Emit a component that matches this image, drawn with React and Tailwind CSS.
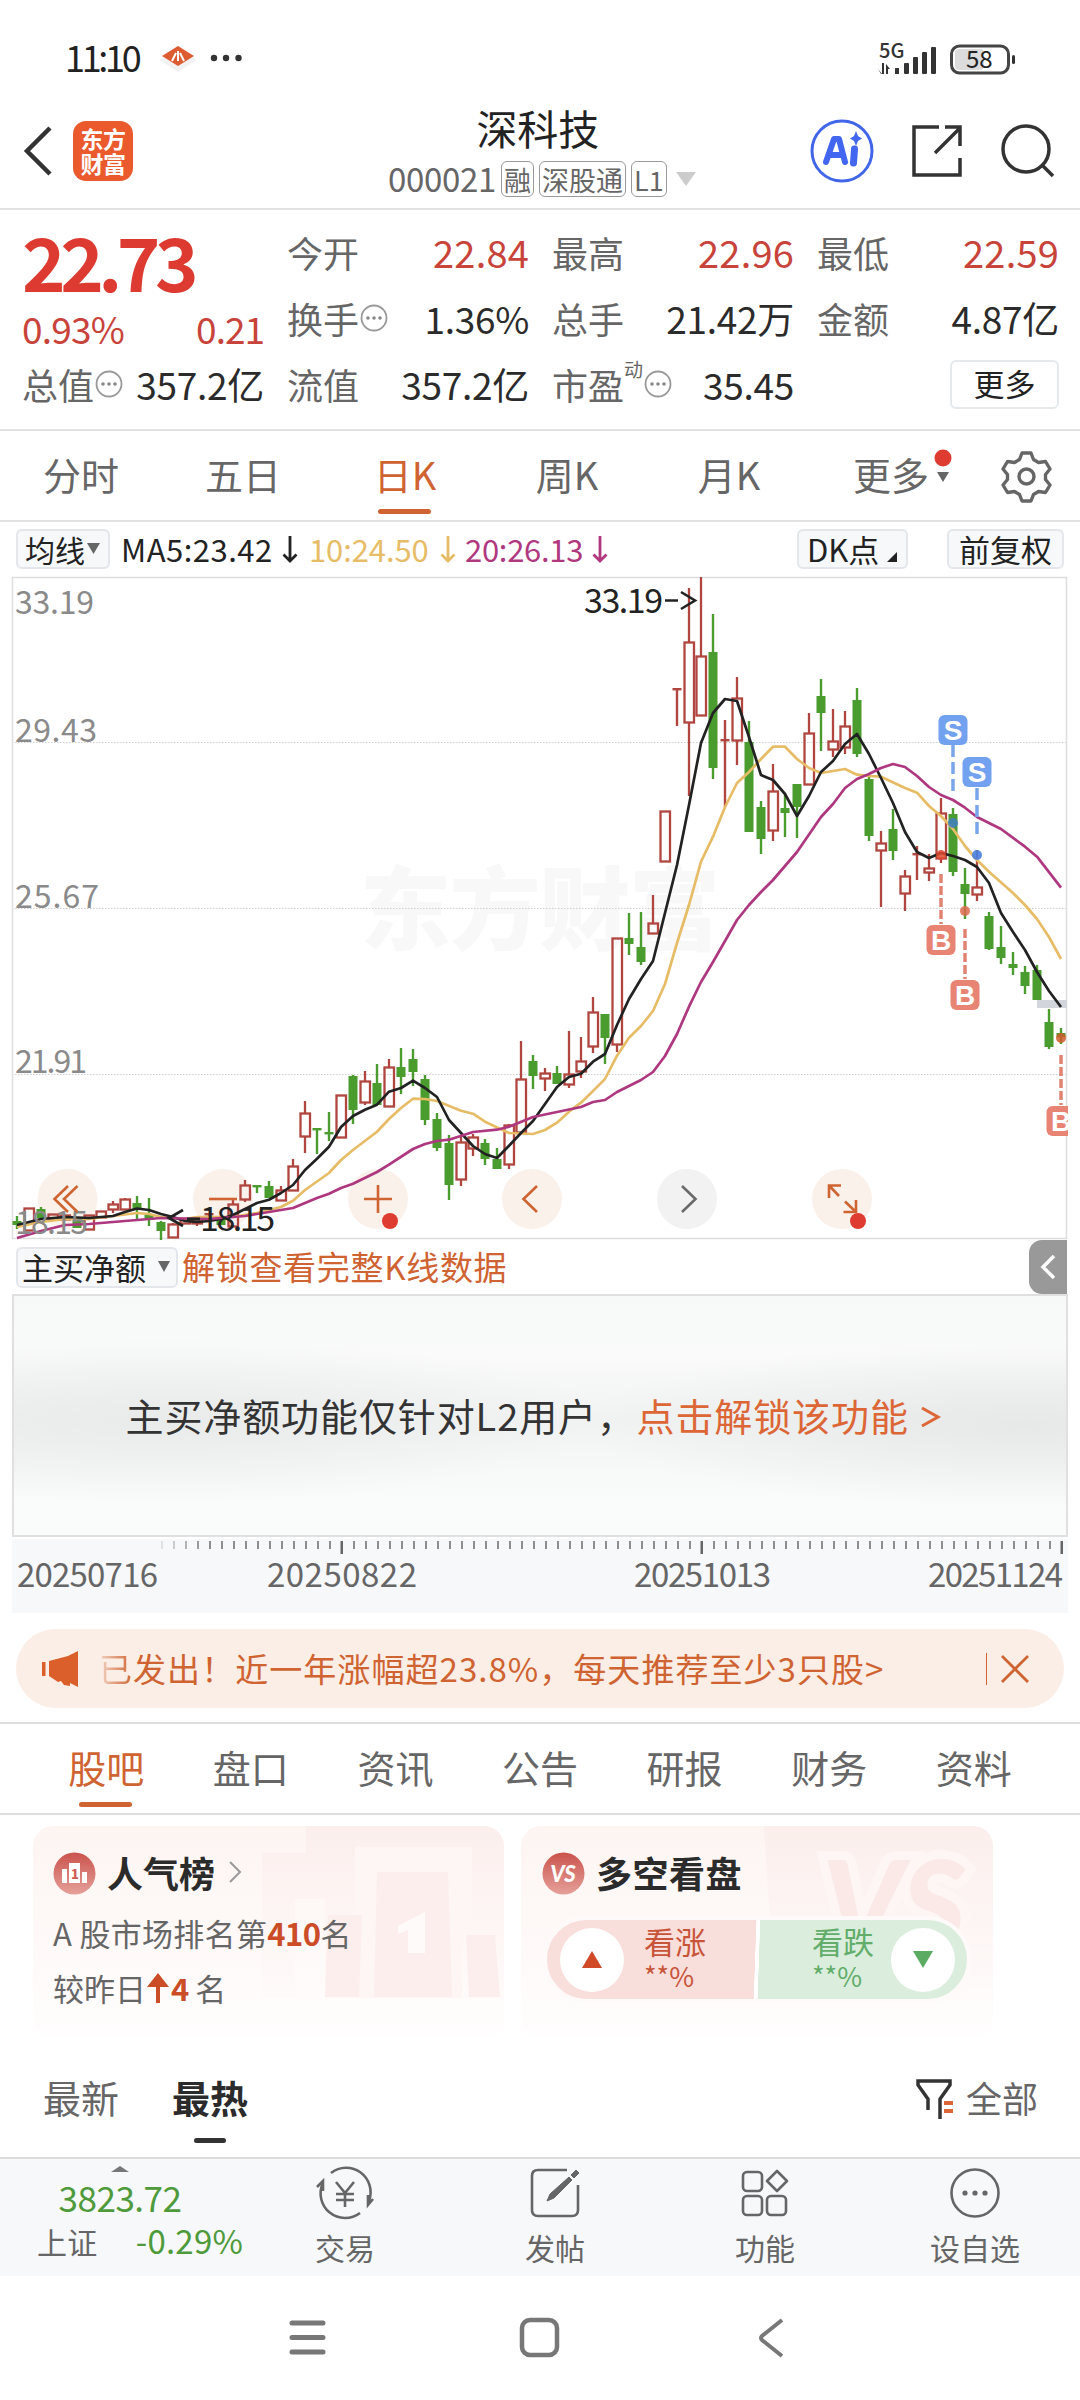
import React from "react";

// [type, high, bodyTop, bodyBottom, low], one entry per trading day
const candles = [
  ["g", 1216, 1221, 1225, 1229],
  ["r", 1208, 1208, 1230, 1230],
  ["g", 1207, 1209, 1218, 1218],
  ["r", 1214, 1214, 1218, 1218],
  ["r", 1215, 1215, 1219, 1219],
  ["g", 1218, 1218, 1228, 1228],
  ["r", 1215, 1215, 1229, 1229],
  ["r", 1211, 1211, 1217, 1217],
  ["r", 1201, 1204, 1209, 1213],
  ["r", 1198, 1199, 1209, 1209],
  ["g", 1196, 1203, 1210, 1219],
  ["g", 1198, 1215, 1220, 1226],
  ["g", 1221, 1222, 1231, 1240],
  ["r", 1223, 1224, 1237, 1238],
  ["r", 1218, 1219, 1223, 1223],
  ["r", 1218, 1219, 1223, 1226],
  ["r", 1213, 1213, 1214, 1220],
  ["g", 1216, 1218, 1225, 1225],
  ["r", 1199, 1204, 1226, 1226],
  ["r", 1180, 1185, 1199, 1202],
  ["g", 1185, 1185, 1186, 1193],
  ["g", 1181, 1186, 1198, 1198],
  ["r", 1186, 1190, 1200, 1200],
  ["r", 1159, 1166, 1190, 1190],
  ["r", 1101, 1113, 1136, 1153],
  ["g", 1128, 1128, 1130, 1154],
  ["g", 1112, 1132, 1133, 1141],
  ["r", 1095, 1095, 1137, 1138],
  ["g", 1075, 1076, 1110, 1124],
  ["r", 1071, 1081, 1102, 1105],
  ["g", 1064, 1083, 1105, 1105],
  ["r", 1059, 1067, 1106, 1106],
  ["g", 1048, 1067, 1077, 1094],
  ["g", 1049, 1059, 1072, 1086],
  ["g", 1075, 1079, 1120, 1125],
  ["g", 1113, 1119, 1148, 1151],
  ["g", 1135, 1143, 1185, 1200],
  ["r", 1135, 1142, 1179, 1186],
  ["r", 1134, 1137, 1148, 1156],
  ["g", 1139, 1143, 1159, 1165],
  ["g", 1148, 1159, 1169, 1169],
  ["r", 1124, 1125, 1164, 1169],
  ["r", 1041, 1079, 1132, 1132],
  ["g", 1055, 1061, 1076, 1089],
  ["r", 1068, 1073, 1078, 1091],
  ["g", 1066, 1073, 1084, 1084],
  ["r", 1031, 1074, 1084, 1088],
  ["r", 1037, 1061, 1071, 1078],
  ["r", 997, 1012, 1046, 1053],
  ["g", 1014, 1014, 1038, 1064],
  ["r", 938, 938, 1044, 1052],
  ["g", 913, 938, 944, 955],
  ["g", 912, 947, 962, 965],
  ["r", 895, 923, 933, 933],
  ["r", 811, 811, 861, 861],
  ["r", 688, 688, 689, 726],
  ["r", 588, 642, 722, 796],
  ["r", 577, 656, 715, 715],
  ["g", 614, 652, 768, 779],
  ["r", 720, 739, 740, 807],
  ["r", 677, 698, 740, 765],
  ["g", 721, 742, 832, 832],
  ["g", 801, 807, 839, 854],
  ["r", 764, 791, 830, 841],
  ["g", 795, 808, 813, 837],
  ["g", 784, 784, 807, 838],
  ["r", 713, 733, 784, 785],
  ["g", 679, 696, 713, 751],
  ["r", 709, 741, 749, 757],
  ["r", 711, 726, 747, 754],
  ["g", 688, 700, 754, 757],
  ["g", 777, 779, 836, 841],
  ["r", 831, 843, 850, 907],
  ["g", 809, 829, 851, 860],
  ["r", 870, 876, 893, 911],
  ["r", 846, 853, 854, 880],
  ["r", 854, 868, 872, 881],
  ["r", 798, 813, 858, 863],
  ["g", 808, 814, 872, 876],
  ["g", 868, 884, 894, 919],
  ["r", 850, 887, 894, 901],
  ["g", 912, 916, 949, 950],
  ["g", 926, 947, 958, 964],
  ["g", 952, 964, 968, 975],
  ["g", 966, 972, 986, 994],
  ["g", 965, 970, 1000, 1000],
  ["g", 1009, 1022, 1047, 1049],
  ["g", 1028, 1033, 1037, 1044],
];

const ma5 =
  "17,1225 41,1219 65,1217 89,1218 113,1216 125,1212 137,1208.5 149,1210 161,1214 173,1217 185,1221 197,1222 209,1221 221,1219 233,1215 257,1203 269,1199.7 281,1193 293,1185 305,1170 317,1158.7 329,1146.7 341,1127 353,1116 365,1109.7 377,1104.7 389,1091.7 401,1088 413,1080.7 425,1088 437,1097 449,1120 461,1133 473,1146 485,1154 497,1158 509,1145.7 521,1133 533,1121 545,1104 557,1087 569,1077 581,1073.7 593,1061.7 605,1054 617,1025 629,999 641,979 653,961 665,913 677,865 689,805 701,743 713,713 725,699 737,701 749,737 761,775 773,780 785,794 797,816 809,796 821,772 833,761 845,744 857,734 869,754 881,778 893,803 905,832 917,852 929,858 941,853 953,856 965,860 977,867 989,883 1001,913 1013,932 1025,950 1037,972 1049,991 1061,1007";

const ma10 =
  "17,1227 41,1222 65,1219 89,1219 113,1216 137,1213 149,1214 161,1217 185,1219 197,1217 233,1217 257,1213 269,1210 281,1207 293,1200.7 305,1190 329,1173 341,1160 353,1150 377,1131.7 389,1119 401,1108 413,1098.7 425,1099 437,1101 461,1110.7 473,1113.7 485,1121.7 509,1133 533,1134 545,1130 557,1122.7 569,1111.7 581,1102.7 593,1091 605,1079 617,1055.7 629,1037.7 641,1026 653,1011 665,984 677,943 689,905 701,861.7 713,836.7 725,807 737,783 749,772 761,759 773,746.7 785,746.7 797,759 809,768 821,773 845,769 857,774.7 869,776 881,776.7 905,788 917,792.7 929,806 941,816 953,829 965,846 977,860 989,871.7 1013,893 1025,905 1037,919 1049,937 1061,959";

const ma20 =
  "17,1238 41,1231 65,1225 89,1224 137,1220 161,1218 209,1219 245,1216 269,1212 293,1208 317,1198 329,1193.7 341,1188 353,1183.7 377,1172 389,1164.7 413,1149 425,1144 437,1141 449,1139.7 473,1132 497,1129.7 509,1126.7 533,1117 557,1112 581,1107 593,1102 605,1100 617,1092 641,1080 653,1072 665,1056 677,1034 689,1006.7 701,982 713,962 725,941 737,920 749,905 761,892 773,880 785,866 797,852 821,817 833,804 845,788 857,779 869,774 881,768 893,764 905,767 917,776 929,787 941,795 953,800 965,807.7 977,817 1001,829 1025,846.7 1037,856.7 1061,887.7";

const RED = "#b0463f";
const GREEN = "#4a9c2e";
const ORANGE = "#cf6432";

const Candle = ({ x, data }) => {
  const [type, high, top, bottom, low] = data;
  if (type === "g") {
    return (
      <g fill={GREEN}>
        <rect x={x - 1.2} y={high} width="2.4" height={low - high} />
        <rect x={x - 4.5} y={top} width="9" height={Math.max(bottom - top, 2.4)} />
      </g>
    );
  }
  if (bottom - top < 2) {
    return (
      <g fill={RED}>
        <rect x={x - 1.2} y={high} width="2.4" height={low - high} />
        <rect x={x - 4.5} y={top} width="9" height="2.4" />
      </g>
    );
  }
  return (
    <g stroke={RED} strokeWidth="2.3" fill="none">
      <path d={`M${x} ${high}V${top}M${x} ${bottom}V${low}`} />
      <rect x={x - 4.5} y={top + 0.5} width="9.5" height={bottom - top} />
    </g>
  );
};

const Flag = ({ x, y, letter, color }) => (
  <g>
    <rect x={x - 14.5} y={y - 15} width="29" height="30" rx="6" fill={color} />
    <text
      x={x}
      y={y + 10}
      textAnchor="middle"
      fontSize="28"
      fontWeight="700"
      fill="#fff"
      fontFamily="Liberation Sans"
    >
      {letter}
    </text>
  </g>
);

const Chart = () => (
  <svg width="1080" height="664" viewBox="0 576 1080 664" className="block shrink-0">
    <text x="360" y="943" fontSize="91" fontWeight="900" fill="#f8f8f8" textLength="360">
      东方财富
    </text>
    <g stroke="#cfcfcf" strokeWidth="1" strokeDasharray="1.5 1.5">
      <path d="M12 742.5H1067M12 908.5H1067M12 1074.5H1067" />
    </g>
    <path d="M12.5 577.5H1066.5V1238.5H12.5Z" fill="none" stroke="#dedede" strokeWidth="1.5" />

    {[67.5, 223, 378, 532, 687, 842].map((cx) => (
      <circle key={cx} cx={cx} cy="1199" r="30" fill={cx === 687 ? "#f2f2f3" : "#fbf1eb"} />
    ))}
    <rect x="1037" y="1000" width="30" height="8" fill="#d3d5dc" />

    {candles.map((c, i) => (
      <Candle key={i} x={17 + i * 12} data={c} />
    ))}
    <g fill="none" strokeWidth="2.7" strokeLinejoin="round">
      <polyline points={ma10} stroke="#e6bd66" />
      <polyline points={ma5} stroke="#222" />
      <polyline points={ma20} stroke="#ae387f" />
    </g>

    {/* buy / sell markers */}
    <g strokeWidth="3.5" strokeDasharray="9 6">
      <path d="M953 745V796M977 788V839" stroke="#79a6ea" strokeDasharray="12 5" />
      <path d="M941 874V924M965 929V979M1061 1055V1105" stroke="#df8473" strokeDasharray="9 3" />
    </g>
    <circle cx="941" cy="855" r="5" fill="#e2492f" opacity="0.85" />
    <circle cx="953" cy="823" r="5" fill="#3f7fc0" opacity="0.85" />
    <circle cx="977" cy="855" r="5" fill="#4a7fe0" opacity="0.9" />
    <circle cx="965" cy="911" r="5" fill="#dc6a4c" opacity="0.85" />
    <circle cx="1061" cy="1038" r="5" fill="#cf5a2c" opacity="0.85" />
    <Flag x={953} y={730} letter="S" color="#72a1f0" />
    <Flag x={977} y={772} letter="S" color="#72a1f0" />
    <Flag x={941} y={940} letter="B" color="#e88474" />
    <Flag x={965} y={995} letter="B" color="#e88474" />
    <clipPath id="chartEdge">
      <rect x="0" y="576" width="1068" height="664" />
    </clipPath>
    <g clipPath="url(#chartEdge)">
      <Flag x={1061} y={1121} letter="B" color="#e88474" />
    </g>

    <g fontSize="32" fill="#8a8a8a">
      <text x="15" y="614" textLength="79">33.19</text>
      <text x="15" y="742" textLength="82">29.43</text>
      <text x="15" y="908" textLength="84">25.67</text>
      <text x="15" y="1073" textLength="72">21.91</text>
      <text x="15" y="1234" textLength="73">18.15</text>
    </g>
    <g fontSize="34" fill="#222">
      <text x="584" y="613" textLength="79">33.19</text>
      <path d="M665 600.5H678M681 592L695 600.5L681 609" fill="none" stroke="#222" strokeWidth="2.6" />
      <text x="200" y="1231" textLength="75">18.15</text>
      <path d="M187 1219H200M183 1210L169 1218L183 1226" fill="none" stroke="#222" strokeWidth="2.8" />
    </g>

    <g fill="none" stroke={ORANGE} strokeWidth="2.600">
      <path d="M68 1186L54.500 1199L68 1212M77.500 1186L64 1199L77.500 1212" />
      <path d="M209 1199H237" />
      <path d="M364 1199H392M378 1185V1213" />
      <path d="M537 1186L523.500 1199L537 1212" />
      <path d="M829 1198V1185.500H841M829 1185.500L839 1196M856 1200V1212H843.500M856 1212L845 1201.500" />
      <path d="M682 1186L695.500 1199L682 1212" stroke="#6a6a6a" />
    </g>
    <circle cx="390" cy="1221" r="8" fill="#de3c30" />
    <circle cx="858" cy="1221" r="8" fill="#de3c30" />
  </svg>
);

const ticks = Array.from({ length: 76 }, (_, i) => 161 + i * 12);

const DateAxis = () => (
  <div className="mx-[12px] mt-[2px] h-[74px] bg-[#f7f8fa]">
    <svg width="1055" height="74" viewBox="12 1539 1055 74" className="block">
      {ticks.map((x, i) => {
        const major = (x - 341) % 360 === 0;
        return (
          <rect
            key={x}
            x={major ? x - 0.5 : x}
            y="1541"
            width={major ? 2.5 : 2}
            height={major ? 13 : 8}
            fill={major ? "#666" : "#8c8c8c"}
            opacity={i < 4 ? 0.2 + i * 0.22 : 1}
          />
        );
      })}
      <g fontSize="33" fill="#666">
        <text x="17" y="1587" textLength="141">20250716</text>
        <text x="267" y="1587" textLength="150">20250822</text>
        <text x="634" y="1587" textLength="137">20251013</text>
        <text x="928" y="1587" textLength="135">20251124</text>
      </g>
    </svg>
  </div>
);

const StatusBar = () => (
  <div className="flex h-[115px] shrink-0 items-center pl-[65px] pr-[63px]">
    <span className="-mt-[4px] w-[77px] text-[36px] leading-none tracking-[-3.300px] text-[#222]">
      11:10
    </span>
    <svg width="100" height="36" viewBox="160 40 100 36" className="ml-[18px]">
      <path d="M178 48L196 60L178 72L160 60Z" fill="#f2f2f2" />
      <path d="M178 46L194 56L178 66L162 56Z" fill="#dd5b31" />
      <path d="M172 61L176 53M178 61V51M184 61L180 53" stroke="#fff" strokeWidth="2" />
      <circle cx="214" cy="58" r="3.200" fill="#333" />
      <circle cx="226" cy="58" r="3.200" fill="#333" />
      <circle cx="238.500" cy="58" r="3.200" fill="#333" />
    </svg>
    <svg width="140" height="46" viewBox="877 32 140 46" className="ml-auto mt-[-2px]">
      <text x="879" y="56" fontSize="20" fontWeight="500" fill="#333">
        5G
      </text>
      <g fill="#333">
        <path d="M878 67L882 72V61H884V72H881ZM886 72V62L890 67H888V72Z" />
        <rect x="895" y="66" width="4" height="6" />
        <rect x="904" y="61" width="5" height="11" rx="1" />
        <rect x="913" y="55" width="5" height="17" rx="1" />
        <rect x="922" y="50" width="5" height="22" rx="1" />
        <rect x="931" y="45" width="5" height="27" rx="1" />
        <rect x="1012" y="53" width="3" height="9" rx="1.500" />
      </g>
      <rect x="951.500" y="44" width="57" height="27" rx="8" fill="#fff" stroke="#444" strokeWidth="3" />
      <rect x="955" y="47" width="29" height="21" rx="4" fill="#dcdcdc" />
      <text x="966" y="66" fontSize="24" fill="#222">
        58
      </text>
    </svg>
  </div>
);

const Tag = ({ children }) => (
  <span className="mr-[5px] flex h-[36px] items-center rounded-[6px] border-[1.5px] border-[#999] px-[2px] text-[27px] leading-none text-[#666]">
    {children}
  </span>
);

const Header = () => (
  <div className="flex h-[95px] shrink-0 justify-between border-b-2 border-[#e2e2e2]">
    <div className="flex w-[388px] pl-[22px] pt-[6px]">
      <svg width="32" height="60" viewBox="0 0 32 60" fill="none" stroke="#333" strokeWidth="4.500">
        <path d="M28 7L5 30L28 53" />
      </svg>
      <div className="ml-[19px] flex h-[60px] w-[60px] flex-col items-center justify-center rounded-[13px] bg-[#ea5a2d] text-[23px] font-bold leading-[25px] tracking-[-0.500px] text-white">
        <span>东方</span>
        <span>财富</span>
      </div>
    </div>
    <div className="flex flex-col">
      <div className="mt-[-9px] mr-[8px] text-center text-[41px] leading-[42px] text-[#222]">深科技</div>
      <div className="mt-[13px] flex items-center text-[33px] leading-[36px] text-[#666]">
        <span className="mr-[5px] -mt-[2px] tracking-[-0.300px]">000021</span>
        <Tag>融</Tag>
        <Tag>深股通</Tag>
        <Tag>L1</Tag>
        <svg width="20" height="14" className="ml-[4px]">
          <path d="M0 0H20L10 14Z" fill="#ccc" />
        </svg>
      </div>
    </div>
    <svg width="270" height="66" viewBox="810 118 270 66" fill="none" className="ml-auto mt-[3px]">
      <circle cx="842" cy="151" r="30" stroke="#4266e8" strokeWidth="3" />
      <path d="M826 162L834 139H839L845 162M830 155H842" stroke="#4266f0" strokeWidth="6" strokeLinejoin="round" strokeLinecap="round" />
      <path d="M854.500 149L853.500 163" stroke="#4266f0" strokeWidth="7" strokeLinecap="round" />
      <path d="M856 131L858 136L862 138.500L858 141L856 146L854 141L850 138.500L854 136Z" fill="#4266f0" />
      <g stroke="#333" strokeWidth="3.500">
        <path d="M939 127H914V175H960V158M945 127H960V146M960 128L935 153" />
        <circle cx="1026" cy="149" r="23" />
        <path d="M1042 165L1053 176" />
      </g>
    </svg>
  </div>
);

const Dots = () => (
  <svg width="28" height="28" viewBox="0 0 28 28" className="ml-[1px]">
    <circle cx="14" cy="14" r="12.500" fill="none" stroke="#999" strokeWidth="1.800" />
    <circle cx="8" cy="14" r="1.800" fill="#888" />
    <circle cx="14" cy="14" r="1.800" fill="#888" />
    <circle cx="20" cy="14" r="1.800" fill="#888" />
  </svg>
);

const Cell = ({ label, value, red, dots, sup }) => (
  <div className="flex h-[66px] items-center justify-between whitespace-nowrap leading-none">
    <span className="-ml-[2px] flex items-center text-[36px] text-[#666]">
      {label}
      {sup && <span className="mt-[-32px] text-[19px]">{sup}</span>}
      {dots && <Dots />}
    </span>
    <span
      className={
        red
          ? "text-[38px] tracking-[0.200px] text-[#c8443b]"
          : "text-[37px] tracking-[-0.300px] text-[#2b2b2b]"
      }
    >
      {value}
    </span>
  </div>
);

const Quote = () => (
  <div className="grid h-[221px] shrink-0 grid-cols-[240px_240px_240px_240px] gap-x-[25px] border-b-2 border-[#e2e2e2] pl-[24px] pt-[9px]">
    <div>
      <div className="-ml-[2px] h-[87px] pt-[4px] text-[74px] font-bold leading-[74px] tracking-[-5.500px] text-[#dd3b31]">
        22.73
      </div>
      <div className="flex h-[45px] items-center justify-between text-[37px] leading-none text-[#c8443b]">
        <span className="-ml-[2px] tracking-[-0.800px]">0.93%</span>
        <span className="tracking-[-1px]">0.21</span>
      </div>
      <Cell label="总值" value="357.2亿" dots />
    </div>
    <div>
      <Cell label="今开" value="22.84" red />
      <Cell label="换手" value="1.36%" dots />
      <Cell label="流值" value="357.2亿" />
    </div>
    <div>
      <Cell label="最高" value="22.96" red />
      <Cell label="总手" value="21.42万" />
      <Cell label="市盈" value="35.45" sup="动" dots />
    </div>
    <div>
      <Cell label="最低" value="22.59" red />
      <Cell label="金额" value="4.87亿" />
      <div className="flex h-[66px] items-center justify-end">
        <div className="flex h-[49px] w-[109px] items-center justify-center rounded-[6px] border-2 border-[#e6e9ec] pb-[3px] text-[31px] leading-none text-[#222]">
          更多
        </div>
      </div>
    </div>
  </div>
);

const PeriodTabs = () => (
  <div className="flex h-[91px] shrink-0 border-b-2 border-[#e2e2e2] text-[38px] leading-[85px] text-[#666]">
    {["分时", "五日", "日K", "周K", "月K", "更多"].map((t) => (
      <div
        key={t}
        className={
          t === "日K"
            ? "relative w-[162px] text-center text-[#cf6331]"
            : "relative w-[162px] text-center"
        }
      >
        {t}
        {t === "日K" && (
          <span className="absolute bottom-[6px] left-[54px] h-[5px] w-[53px] rounded-full bg-[#cf6331]" />
        )}
        {t === "更多" && (
          <svg width="18" height="34" className="absolute left-[124px] top-[18px]">
            <circle cx="9" cy="9" r="8.500" fill="#de3c30" />
            <path d="M3 23H15L9 33Z" fill="#666" />
          </svg>
        )}
      </div>
    ))}
    <svg width="108" height="88" viewBox="972 432 108 88" fill="none" stroke="#666" strokeWidth="3.400">
      <path
        strokeLinejoin="round"
        d="M1022 454h9l2.500 6.500 5 3 7-1 4.500 7.500-4.500 5.500v5l4.500 5.500-4.500 7.500-7-1-5 3-2.500 6.500h-9l-2.500-6.500-5-3-7 1-4.500-7.500 4.500-5.500v-5l-4.500-5.500 4.500-7.500 7 1 5-3z"
      />
      <circle cx="1026.500" cy="477.500" r="7.500" />
    </svg>
  </div>
);

const Down = ({ className }) => (
  <svg width="18" height="30" viewBox="0 0 18 30" className={className}>
    <path d="M9 2V27M2.500 20.500L9 27L15.500 20.500" fill="none" stroke="currentColor" strokeWidth="2.800" />
  </svg>
);

const MaRow = () => (
  <div className="flex h-[54px] shrink-0 items-center whitespace-nowrap px-[16px] text-[31px] leading-none text-[#222]">
    <div className="flex h-[40px] w-[94px] shrink-0 items-center rounded-[6px] border-2 border-[#e3e6ea] bg-[#f6f8fa] pb-[1px] pl-[7px] text-[30px]">
      均线
      <svg width="13" height="11" className="ml-[2px]">
        <path d="M0 0H13L6.500 11Z" fill="#666" />
      </svg>
    </div>
    <span className="-mt-[2px] ml-[11px] w-[160px] tracking-[0.500px]">MA5:23.42</span>
    <Down className="shrink-0" />
    <span className="-mt-[2px] ml-[10px] w-[130px] tracking-[-0.100px] text-[#e6bd66]">10:24.50</span>
    <Down className="shrink-0 text-[#e6bd66]" />
    <span className="-mt-[2px] ml-[8px] w-[126px] tracking-[-0.300px] text-[#b0387f]">20:26.13</span>
    <Down className="shrink-0 text-[#b0387f]" />
    <div className="ml-auto flex h-[40px] w-[111px] items-center rounded-[6px] border-2 border-[#e3e6ea] bg-[#f6f8fa] pb-[2px] pl-[8px]">
      DK点
      <svg width="10" height="10" className="ml-[8px] mt-[18px]">
        <path d="M10 0V10H0Z" fill="#222" />
      </svg>
    </div>
    <div className="ml-[39px] flex h-[40px] w-[117px] items-center justify-center rounded-[6px] border-2 border-[#e3e6ea] bg-[#f6f8fa] pb-[2px]">
      前复权
    </div>
  </div>
);

const UnlockRow = () => (
  <div className="flex h-[54px] shrink-0 items-center pl-[16px] pr-[13px] leading-none">
    <div className="flex h-[41px] w-[162px] items-center rounded-[6px] border-2 border-[#e3e6ea] bg-[#f6f8fa] pb-[2px] pl-[4px] text-[31px] text-[#222]">
      主买净额
      <svg width="12" height="11" className="ml-[12px]">
        <path d="M0 0H12L6 11Z" fill="#666" />
      </svg>
    </div>
    <span className="-mt-[2px] ml-[4px] text-[33px] tracking-[0.700px] text-[#cf6331]">解锁查看完整K线数据</span>
    <div className="ml-auto flex h-[54px] w-[38px] items-center justify-center rounded-l-[13px] bg-[#999]">
      <svg width="16" height="26" viewBox="0 0 16 26" fill="none" stroke="#fff" strokeWidth="3.500">
        <path d="M14 2L3 13L14 24" />
      </svg>
    </div>
  </div>
);

const LockedPanel = () => (
  <div className="mx-[12px] flex h-[243px] shrink-0 items-center justify-center border-2 border-[#e0e0e0] bg-[#f9fafa] bg-[radial-gradient(ellipse_42%_34%_at_14%_52%,#e9ebeb,transparent),radial-gradient(ellipse_42%_34%_at_96%_54%,#e7e9e9,transparent),linear-gradient(180deg,#f7f9f9_0%,#f9faf9_25%,#f1f2f2_52%,#f8f9f9_75%,#fafbfb_90%)] text-[38px] leading-none tracking-[0.900px] text-[#333]">
    <div className="-ml-[6px] -mt-[2px] flex w-[823px] whitespace-nowrap">
      <span className="w-[511px]">主买净额功能仅针对L2用户，</span>
      <span className="text-[#dc6635]">点击解锁该功能</span>
      <svg width="22" height="32" viewBox="0 0 22 32" className="ml-[11px] mt-[5px]">
        <path d="M2 7L18 16L2 25" fill="none" stroke="#dc6635" strokeWidth="3" />
      </svg>
    </div>
  </div>
);

const Banner = () => (
  <div className="mx-[16px] mt-[16px] flex h-[79px] shrink-0 items-center rounded-full bg-[#fbeee6] pl-[24px] pr-[34px] text-[#cf6331]">
    <svg width="44" height="38" viewBox="0 0 44 38" fill="#da5f2a">
      <path d="M2 12H5.500V26H2ZM9 11L28 6L38 1V37L30 33V36L24 35L21 31L18 32L9 26Z" />
    </svg>
    <div className="-mt-[1px] ml-[15px] flex whitespace-nowrap text-[33px] leading-none tracking-[1.050px]">
      <span className="bg-gradient-to-r from-[#cf633130] to-[#cf6331] bg-clip-text text-transparent">已</span>
      <span>发出！近一年涨幅超23.8%，每天推荐至少3只股&gt;</span>
    </div>
    <span className="ml-auto h-[32px] w-[1.500px] bg-[#cf6331]" />
    <svg width="30" height="30" viewBox="0 0 30 30" className="ml-[13px]">
      <path d="M2 2L28 28M28 2L2 28" stroke="#cf6331" strokeWidth="2.800" />
    </svg>
  </div>
);

const InfoTabs = () => (
  <div className="mt-[14px] flex h-[93px] shrink-0 border-y-2 border-[#dfdfdf] px-[34px] text-[38px] leading-[86px] text-[#666]">
    {["股吧", "盘口", "资讯", "公告", "研报", "财务", "资料"].map((t, i) => (
      <div
        key={t}
        className={i === 0 ? "relative flex-1 text-center text-[#cf6331]" : "relative flex-1 text-center"}
      >
        {t}
        {i === 0 && (
          <span className="absolute bottom-[6px] left-[45px] h-[5px] w-[53px] rounded-full bg-[#cf6331]" />
        )}
      </div>
    ))}
  </div>
);

const RankCard = () => (
  <div className="relative h-[210px] w-[471px] overflow-hidden rounded-[20px] bg-gradient-to-b from-[#fdf5f2] to-[#fffdfd] pl-[20px] leading-none">
    <svg width="471" height="210" viewBox="33 1826 471 210" className="absolute left-0 top-0">
      <defs>
        <linearGradient id="podium" x1="0" y1="0" x2="0" y2="1">
          <stop offset="0" stopColor="#faeae8" />
          <stop offset="1" stopColor="#fefafa" />
        </linearGradient>
      </defs>
      <path d="M262 1853H306V1826H504V1998H325V1899H295V1998H262Z" fill="url(#podium)" opacity="0.550" />
      <path d="M355 1998V1847H472V1925H462V1998Z" fill="#fdf6f4" />
      <path d="M377 1872H448L452 1997H374ZM328 1915H362L359 1997H325ZM466 1935H495L500 1997H469Z" fill="#fbeeec" />
      <path d="M398 1926L425 1912V1953H408V1930L398 1934Z" fill="#fefaf9" />
    </svg>
    <div className="relative flex h-[94px] items-center">
      <svg width="43" height="43" viewBox="0 0 43 43">
        <circle cx="21.500" cy="21.500" r="21" fill="url(#badge)" />
        <path d="M9 17H14V31H9ZM16 11H27V31H16ZM29 20H34V31H29Z" fill="#fff" />
        <text x="18" y="27" fontSize="13" fontWeight="800" fill="#cf5c55">1</text>
      </svg>
      <span className="-mt-[3px] ml-[11px] text-[36px] font-bold text-[#2b2b2b]">人气榜</span>
      <svg width="14" height="22" viewBox="0 0 14 22" className="-mt-[3px] ml-[13px]">
        <path d="M2 1L12 11L2 21" fill="none" stroke="#999" strokeWidth="2" />
      </svg>
    </div>
    <div className="relative mt-[-3px] whitespace-nowrap text-[31px] tracking-[0.300px] text-[#666]">
      A 股市场排名第<span className="font-bold tracking-[-0.500px] text-[#cb4d27]">410</span>名
    </div>
    <div className="relative mt-[24px] flex items-center text-[31px] text-[#666]">
      较昨日
      <svg width="22" height="30" viewBox="0 0 22 30" className="ml-[1px]">
        <path d="M11 0L22 14H13V30H9V14H0Z" fill="#cb4d27" />
      </svg>
      <span className="ml-[2px] mr-[6px] font-bold text-[#cb4d27]">4</span>名
    </div>
  </div>
);

const VsCard = () => (
  <div className="relative ml-[17px] h-[210px] w-[472px] overflow-hidden rounded-[20px] bg-gradient-to-b from-[#fdf5f2] to-[#fffdfd] pl-[21px] leading-none">
    <svg width="472" height="210" viewBox="521 1826 472 210" className="absolute left-0 top-0">
      <path d="M764 1826H993V2000H775Z" fill="url(#podium)" opacity="0.600" />
      <text
        x="822"
        y="1950"
        fontSize="124"
        fontWeight="900"
        fontStyle="italic"
        fill="#fae9e7"
        stroke="#fdf6f4"
        strokeWidth="18"
        paintOrder="stroke"
        fontFamily="Lato"
      >
        VS
      </text>
    </svg>
    <div className="relative flex h-[94px] items-center">
      <svg width="43" height="43" viewBox="0 0 43 43">
        <defs>
          <linearGradient id="badge" x1="0" y1="0" x2="0" y2="1">
            <stop offset="0" stopColor="#ca534d" />
            <stop offset="1" stopColor="#e6a09a" />
          </linearGradient>
        </defs>
        <circle cx="21.500" cy="21.500" r="21" fill="url(#badge)" />
        <text x="21" y="30" fontSize="22" fontWeight="900" fontStyle="italic" fill="#fff" textAnchor="middle" fontFamily="Lato">
          VS
        </text>
      </svg>
      <span className="-mt-[2px] ml-[11px] text-[36px] font-bold tracking-[0.500px] text-[#2b2b2b]">多空看盘</span>
    </div>
    <div className="relative ml-[1px] flex h-[87px] w-[428px] -translate-y-[4px] items-center rounded-full border-4 border-[#fffafa] bg-[linear-gradient(92deg,#f8dfdb_0_49.500%,#fff_49.600%_50.400%,#dbeedd_50.500%)] pl-[13px] pr-[12px]">
      <div className="flex h-[64px] w-[64px] items-center justify-center rounded-full bg-white">
        <svg width="20" height="17">
          <path d="M10 0L20 17H0Z" fill="#d04a28" />
        </svg>
      </div>
      <div className="-mt-[5px] ml-[20px] text-[31px] text-[#c8553a]">
        <div>看涨</div>
        <div className="mt-[6px] text-[27px]">**%</div>
      </div>
      <div className="-mt-[5px] ml-auto mr-[17px] text-[31px] text-[#62ad6a]">
        <div>看跌</div>
        <div className="mt-[6px] text-[27px]">**%</div>
      </div>
      <div className="flex h-[64px] w-[64px] items-center justify-center rounded-full bg-white">
        <svg width="20" height="17">
          <path d="M0 0H20L10 17Z" fill="#5bab62" />
        </svg>
      </div>
    </div>
  </div>
);

const PostTabs = () => (
  <div className="flex h-[121px] shrink-0 items-start pl-[43px] pr-[42px] pt-[42px] text-[38px] leading-[38px] text-[#666]">
    <span>最新</span>
    <div className="ml-[53px] flex flex-col items-center font-bold text-[#2b2b2b]">
      最热
      <span className="mt-[22px] h-[5px] w-[32px] rounded-full bg-[#333]" />
    </div>
    <svg width="42" height="42" viewBox="0 0 42 42" className="ml-auto mt-[1px]" fill="none" stroke="#333" strokeWidth="3.500">
      <path d="M13 31V20L3 6V2H35V6L25 20V40" />
      <path d="M29 24H38M29 32H38" stroke="#dc6635" strokeWidth="4" />
    </svg>
    <span className="ml-[9px] text-[36px]">全部</span>
  </div>
);

const BarItem = ({ label, children }) => (
  <div className="flex w-[210px] flex-col items-center pt-[6px] text-[30px] leading-[30px] text-[#666]">
    <svg width="60" height="56" viewBox="-30 -28 60 56" fill="none" stroke="#666" strokeWidth="2.600">
      {children}
    </svg>
    <span className="mt-[11px]">{label}</span>
  </div>
);

const BottomBar = () => (
  <div className="flex h-[119px] shrink-0 border-t-2 border-[#dcdcdc] bg-[#f6f8fa]">
    <div className="flex w-[240px] shrink-0 flex-col items-center pt-[7px] leading-none text-[#4f9a3a]">
      <svg width="18" height="6">
        <path d="M9 0L18 6H0Z" fill="#777" />
      </svg>
      <span className="mt-[7px] text-[35px] tracking-[-0.500px]">3823.72</span>
      <div className="mt-[10px] flex w-[206px] translate-x-[20px] items-center justify-between text-[33px] tracking-[0.200px]">
        <span className="text-[30px] text-[#666]">上证</span>
        <span>-0.29%</span>
      </div>
    </div>
    <BarItem label="交易">
      <path d="M-14 -20A24.500 24.500 0 0 1 24 8M15 20A24.500 24.500 0 0 1 -22 -10M-28 -6L-22 -12V-2M28 6L23 12V2M-9 -11L0 0L9 -11M0 0V14M-9 1H9M-9 7H9" />
    </BarItem>
    <BarItem label="发帖">
      <path d="M12 -23H-17Q-23 -23 -23 -17V17Q-23 23 -17 23H17Q23 23 23 17V-8" />
      <path d="M-8 8L-5 1L14 -16L17 -13L-1 5ZM16 -18L21 -23L24 -20L19 -15Z" fill="#666" strokeWidth="1" />
    </BarItem>
    <BarItem label="功能">
      <rect x="-22" y="-21" width="19" height="19" rx="4" />
      <rect x="-22" y="3" width="19" height="19" rx="4" />
      <rect x="2" y="3" width="19" height="19" rx="4" />
      <path d="M12 -22L22 -12L12 -2L2 -12Z" strokeLinejoin="round" />
    </BarItem>
    <BarItem label="设自选">
      <circle cx="0" cy="0" r="23.500" />
      <g fill="#666" stroke="none">
        <circle cx="-10" cy="0" r="2.600" />
        <circle cx="0" cy="0" r="2.600" />
        <circle cx="10" cy="0" r="2.600" />
      </g>
    </BarItem>
  </div>
);

const SystemNav = () => (
  <div className="flex h-[124px] shrink-0 items-center pl-[288px]">
    <svg width="38" height="38" viewBox="0 0 38 38" stroke="#777" strokeWidth="5" strokeLinecap="round">
      <path d="M4 4H35M4 18.500H35M4 33H35" />
    </svg>
    <svg width="42" height="42" viewBox="0 0 42 42" className="ml-[193px]">
      <rect x="3" y="3" width="35" height="35" rx="8" fill="none" stroke="#777" strokeWidth="4.500" />
    </svg>
    <svg width="28" height="42" viewBox="0 0 28 42" className="ml-[196px]">
      <path d="M25 3L5 19Q3 21 5 23L25 39" fill="none" stroke="#777" strokeWidth="4" />
    </svg>
  </div>
);

const App = () => {
  return (
    <div className="flex h-[2400px] w-[1080px] flex-col overflow-hidden bg-white font-['Noto_Sans_CJK_SC',sans-serif]">
      <StatusBar />
      <Header />
      <Quote />
      <PeriodTabs />
      <MaRow />
      <Chart />
      <UnlockRow />
      <LockedPanel />
      <DateAxis />
      <Banner />
      <InfoTabs />
      <div className="mt-[11px] flex shrink-0 pl-[33px]">
        <RankCard />
        <VsCard />
      </div>
      <PostTabs />
      <BottomBar />
      <SystemNav />
    </div>
  );
};

export default App;
